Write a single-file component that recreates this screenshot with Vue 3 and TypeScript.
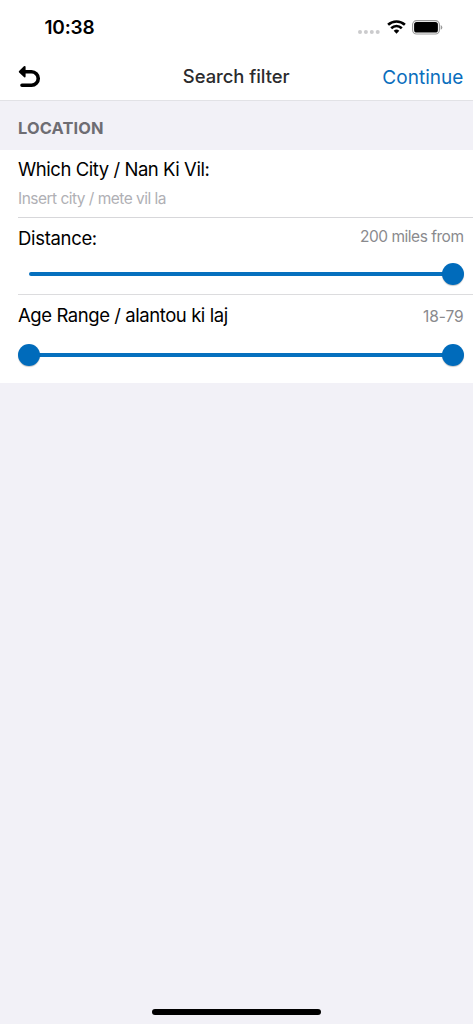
<script setup lang="ts">
interface RangeRow {
  label: string
  value: string
  kind: 'distance' | 'age'
  thumbs: number[]
}

const rows: RangeRow[] = [
  { label: 'Distance:', value: '200 miles from', kind: 'distance', thumbs: [100] },
  { label: 'Age Range / alantou ki laj', value: '18-79', kind: 'age', thumbs: [0, 100] },
]
</script>

<template>
  <div class="screen">
    <div class="status">
      <span class="time">10:38</span>
      <div class="indicators">
        <svg class="signal" width="22" height="4" viewBox="0 0 22 4">
          <circle v-for="n in 4" :key="n" :cx="2 + (n - 1) * 5.9" cy="2" r="2" fill="#cbcbcd" />
        </svg>
        <svg class="wifi" width="19" height="14" viewBox="0 0 19 14">
          <g fill="none" stroke="#000" stroke-width="2.6">
            <path d="M1.1 4.8C5.9.3 13.1.3 17.9 4.8" />
            <path d="M4.2 8.3C7.3 5.4 11.7 5.4 14.8 8.3" />
          </g>
          <path d="M6.7 10.8Q9.5 8.4 12.3 10.8L9.5 13.7Z" />
        </svg>
        <svg class="battery" width="31" height="15" viewBox="0 0 31 15">
          <rect x=".6" y=".6" width="26.8" height="13.4" rx="4" fill="none" stroke="#999" stroke-width="1.1" />
          <rect x="2.1" y="2.1" width="23.8" height="10.4" rx="2.6" />
          <path d="M28.7 5.1Q30.3 5.8 30.3 7.4T28.7 9.7Z" fill="#999" />
        </svg>
      </div>
    </div>

    <header class="nav">
      <svg class="back" width="24" height="24" viewBox="0 0 24 24">
        <path d="M7 6.8H14.5A6.7 6.7 0 0 1 14.5 20.3H5" fill="none" stroke="#000" stroke-width="3.6" stroke-linecap="round" />
        <path d="M2.8 6.7L7.6 2V11.4Z" stroke="#000" stroke-width="2" stroke-linejoin="round" />
      </svg>
      <h1 class="title">Search filter</h1>
      <a class="continue">Continue</a>
    </header>

    <h2 class="section"><span>LOCATION</span></h2>

    <main class="list">
      <div class="row city">
        <label class="label which">Which City / Nan Ki Vil:</label>
        <span class="placeholder">Insert city / mete vil la</span>
      </div>
      <div v-for="row in rows" :key="row.kind" class="row" :class="row.kind">
        <div class="heading">
          <span class="label">{{ row.label }}</span>
          <span class="value">{{ row.value }}</span>
        </div>
        <div class="slider">
          <div class="track"></div>
          <i v-for="t in row.thumbs" :key="t" class="thumb" :style="{ left: t + '%' }"></i>
        </div>
      </div>
    </main>

    <div class="home"></div>
  </div>
</template>

<style>
body {
  background: #f2f1f7;
}
</style>

<style scoped>
.screen {
  width: 473px;
  height: 1024px;
  box-sizing: border-box;
  display: flex;
  flex-direction: column;
  background: #f2f1f7;
  font-family: Inter, "Liberation Sans", sans-serif;
  color: #000;
  overflow: hidden;
  white-space: nowrap;
}
.status {
  height: 54px;
  flex: none;
  background: #fff;
  display: flex;
  justify-content: space-between;
  padding: 0 30px 0 44.5px;
}
.time {
  font-size: 19px;
  font-weight: 600;
  line-height: 55px;
  letter-spacing: -0.2px;
}
.indicators {
  display: flex;
  align-items: flex-start;
}
.signal {
  margin: 30px 6.5px 0 0;
}
.wifi {
  margin: 20px 6.5px 0 0;
}
.battery {
  margin-top: 20px;
}
.nav {
  height: 46.5px;
  flex: none;
  box-sizing: border-box;
  background: #fff;
  border-bottom: 1px solid #e2e2e6;
  display: grid;
  grid-template-columns: 1fr auto 1fr;
  padding: 0 9.5px 0 17px;
  line-height: 45px;
}
.back {
  margin-top: 11px;
}
.title {
  margin: 0 8px 0 0;
  font-size: 18.4px;
  font-weight: 500;
  letter-spacing: -0.03px;
  color: #2b2b2d;
}
.continue {
  justify-self: end;
  font-size: 19px;
  letter-spacing: 0.04px;
  line-height: 47px;
  color: #0a6ebd;
}
.section {
  margin: 0;
  height: 49px;
  flex: none;
  padding-left: 18px;
  font-size: 16.4px;
  font-weight: 700;
  letter-spacing: 0.15px;
  line-height: 55px;
  color: #6e6d73;
}
.list {
  background: #fff;
  height: 233px;
  flex: none;
}
.row {
  margin-left: 18px;
  box-sizing: border-box;
  display: flex;
  flex-direction: column;
}
.city {
  height: 68px;
  border-bottom: 1px solid #d7d7da;
}
.label {
  font-size: 18.5px;
  line-height: 24px;
  letter-spacing: -0.45px;
}
.distance .label {
  letter-spacing: -0.32px;
}
.age .label {
  letter-spacing: -0.43px;
}
.which {
  margin-top: 7px;
}
.placeholder {
  margin-top: 7px;
  font-size: 15.5px;
  line-height: 22px;
  letter-spacing: -0.52px;
  color: #b0b0b5;
}
.distance {
  height: 77px;
  border-bottom: 1px solid #dcdcde;
}
.heading {
  display: flex;
  justify-content: space-between;
  height: 24px;
  padding-right: 9.5px;
}
.value {
  font-size: 15.5px;
  line-height: 24px;
  letter-spacing: -0.48px;
  color: #8a8a8e;
}
.distance .heading {
  margin-top: 8px;
}
.distance .value {
  margin-top: -1px;
}
.age .heading {
  margin-top: 8px;
}
.age .value {
  letter-spacing: -0.1px;
  line-height: 28px;
}
.slider {
  position: relative;
  height: 22px;
  margin: 13.5px 20.5px 0 11px;
}
.age .slider {
  margin-top: 17.5px;
}
.track {
  height: 4px;
  border-radius: 2px;
  background: #0670be;
  transform: translateY(9px);
}
.thumb {
  position: absolute;
  top: 0;
  width: 22px;
  height: 22px;
  margin-left: -11px;
  border-radius: 50%;
  background: #006bbb;
  box-shadow: 0 1px 1px rgba(0, 0, 0, 0.22);
}
.home {
  width: 169px;
  height: 6px;
  border-radius: 3px;
  background: #000;
  margin: auto auto 9px 152px;
}
</style>
